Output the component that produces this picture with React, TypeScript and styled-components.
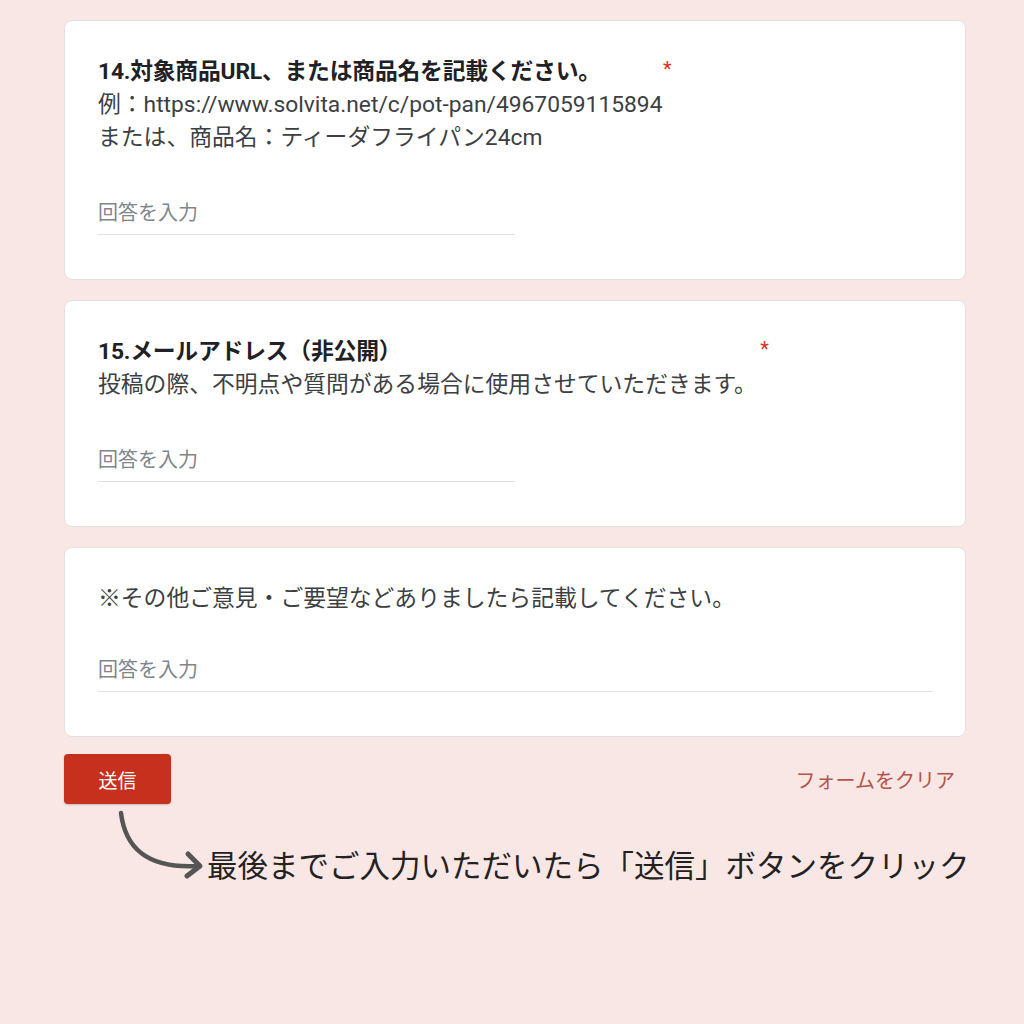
import React from 'react'
import styled, { createGlobalStyle } from 'styled-components'

const GlobalStyle = createGlobalStyle`
  html, body {
    margin: 0;
    padding: 0;
    background: #f9e7e5;
  }
  body {
    font-family: Roboto, "Noto Sans CJK JP", sans-serif;
    color: #202124;
  }
`

const Page = styled.div`
  width: 1024px;
  height: 1024px;
  overflow: hidden;
  background: #f9e7e5;
`

const Column = styled.div`
  width: 902px;
  margin: -2px 0 0 64px;
  display: flex;
  flex-direction: column;
  gap: 20px;
`

const PrevCardEdge = styled.div`
  height: 1px;
  margin: 0 1px 0 1px;
  background: #fff;
  border: 1px solid #e3dcdc;
  border-top: none;
  border-radius: 0 0 8px 8px;
`

const Card = styled.div`
  background: #fff;
  border: 1px solid #e6dfdf;
  border-radius: 8px;
  padding: 34px 33px 44px;
  display: flex;
  flex-direction: column;
`

const TitleRow = styled.div`
  display: flex;
  align-items: flex-start;
`

const Title = styled.div`
  font-size: 22.8px;
  line-height: 33px;
  font-weight: 700;
  color: #202124;
  letter-spacing: -0.2px;
`

const Required = styled.span<{ $gap: number }>`
  margin-left: ${p => p.$gap}px;
  color: #d93025;
  font-size: 20px;
  line-height: 28px;
`

const Description = styled.div`
  font-size: 22.8px;
  line-height: 33px;
  color: #3c4043;
  white-space: pre-line;
`

const Field = styled.div<{ $full?: boolean }>`
  margin-top: ${p => (p.$full ? 42 : 46)}px;
  width: ${p => (p.$full ? '100%' : '417px')};
  height: 34px;
  border-bottom: 1px solid #e0e0e0;
  font-size: 20px;
  line-height: 26px;
  color: #80868b;
`

const Actions = styled.div`
  display: flex;
  align-items: center;
  justify-content: space-between;
  margin-top: -3px;
  padding-right: 11px;
`

const SubmitButton = styled.button`
  width: 107px;
  height: 50px;
  border: none;
  border-radius: 4px;
  background: #c5311d;
  color: #fff;
  font-family: Roboto, "Noto Sans CJK JP", sans-serif;
  font-size: 19px;
  box-shadow: 0 1px 2px rgba(0, 0, 0, 0.2);
`

const ClearLink = styled.span`
  color: #b4544a;
  font-size: 20px;
`

const Annotation = styled.div`
  display: flex;
  align-items: flex-end;
  margin-top: -18px;
  padding-left: 46px;

  svg {
    flex-shrink: 0;
  }
`

const AnnotationText = styled.div`
  flex-shrink: 0;
  white-space: nowrap;
  font-size: 30.5px;
  line-height: 40px;
  color: #222;
  font-family: "Noto Sans CJK JP", sans-serif;
  margin-bottom: 2px;
`

function Arrow() {
  return (
    <svg width="97" height="80" viewBox="0 0 97 80" fill="none">
      <path
        d="M11 7 C15 40, 35 63, 88 60"
        stroke="#555"
        strokeWidth="4.5"
        strokeLinecap="round"
      />
      <path
        d="M78 48 L90 60 L77 70"
        stroke="#555"
        strokeWidth="5"
        strokeLinecap="round"
        strokeLinejoin="round"
      />
    </svg>
  )
}

export default function App() {
  return (
    <Page>
      <GlobalStyle />
      <Column>
        <PrevCardEdge />

        <Card>
          <TitleRow>
            <Title>14.対象商品URL、または商品名を記載ください。</Title>
            <Required $gap={62}>*</Required>
          </TitleRow>
          <Description>
            {'例：https://www.solvita.net/c/pot-pan/4967059115894\nまたは、商品名：ティーダフライパン24cm'}
          </Description>
          <Field>回答を入力</Field>
        </Card>

        <Card>
          <TitleRow>
            <Title>15.メールアドレス（非公開）</Title>
            <Required $gap={359}>*</Required>
          </TitleRow>
          <Description>投稿の際、不明点や質問がある場合に使用させていただきます。</Description>
          <Field>回答を入力</Field>
        </Card>

        <Card>
          <Description>※その他ご意見・ご要望などありましたら記載してください。</Description>
          <Field $full>回答を入力</Field>
        </Card>

        <Actions>
          <SubmitButton>送信</SubmitButton>
          <ClearLink>フォームをクリア</ClearLink>
        </Actions>

        <Annotation>
          <Arrow />
          <AnnotationText>最後までご入力いただいたら「送信」ボタンをクリック</AnnotationText>
        </Annotation>
      </Column>
    </Page>
  )
}
